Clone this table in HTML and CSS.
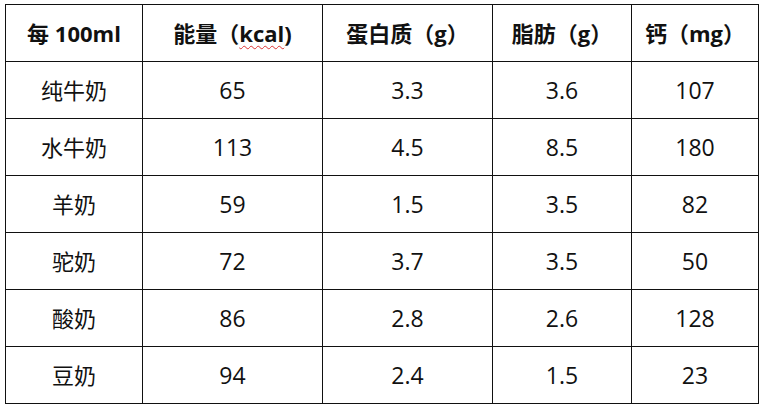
FILE: index.html
```html
<!DOCTYPE html>
<html lang="zh">
<head>
<meta charset="utf-8">
<link rel="stylesheet" href="styles.css">
</head>
<body>
<table class="milk">
  <colgroup>
    <col class="c1"><col class="c2"><col class="c3"><col class="c4"><col class="c5">
  </colgroup>
  <thead>
    <tr>
      <th>每 100ml</th>
      <th>能量（<span class="spell">kcal</span>)</th>
      <th>蛋白质（g）</th>
      <th>脂肪（g）</th>
      <th>钙（mg）</th>
    </tr>
  </thead>
  <tbody>
    <tr><td>纯牛奶</td><td>65</td><td>3.3</td><td>3.6</td><td>107</td></tr>
    <tr><td>水牛奶</td><td>113</td><td>4.5</td><td>8.5</td><td>180</td></tr>
    <tr><td>羊奶</td><td>59</td><td>1.5</td><td>3.5</td><td>82</td></tr>
    <tr><td>驼奶</td><td>72</td><td>3.7</td><td>3.5</td><td>50</td></tr>
    <tr><td>酸奶</td><td>86</td><td>2.8</td><td>2.6</td><td>128</td></tr>
    <tr><td>豆奶</td><td>94</td><td>2.4</td><td>1.5</td><td>23</td></tr>
  </tbody>
</table>
</body>
</html>
```
FILE: styles.css
```css
html, body {
  margin: 0;
  padding: 0;
  background: #fff;
}
body {
  padding: 4px 0 0 5px;
  font-family: "Open Sans", "Noto Sans CJK SC", sans-serif;
  color: #111;
}
.milk {
  border-collapse: collapse;
  table-layout: fixed;
  width: 753px;
}
.c1 { width: 137px; }
.c2 { width: 180px; }
.c3 { width: 170px; }
.c4 { width: 139px; }
.c5 { width: 127px; }
.milk th, .milk td {
  border: 1px solid #111;
  height: 56px;
  padding: 0;
  text-align: center;
  vertical-align: middle;
  font-size: 22px;
  line-height: 1;
}
.milk th {
  font-weight: 700;
}
.milk td {
  font-weight: 400;
}
.milk td + td {
  font-size: 23px;
}
.spell {
  text-decoration: underline wavy #d33;
  text-decoration-thickness: 1px;
  text-underline-offset: 3px;
}
```
